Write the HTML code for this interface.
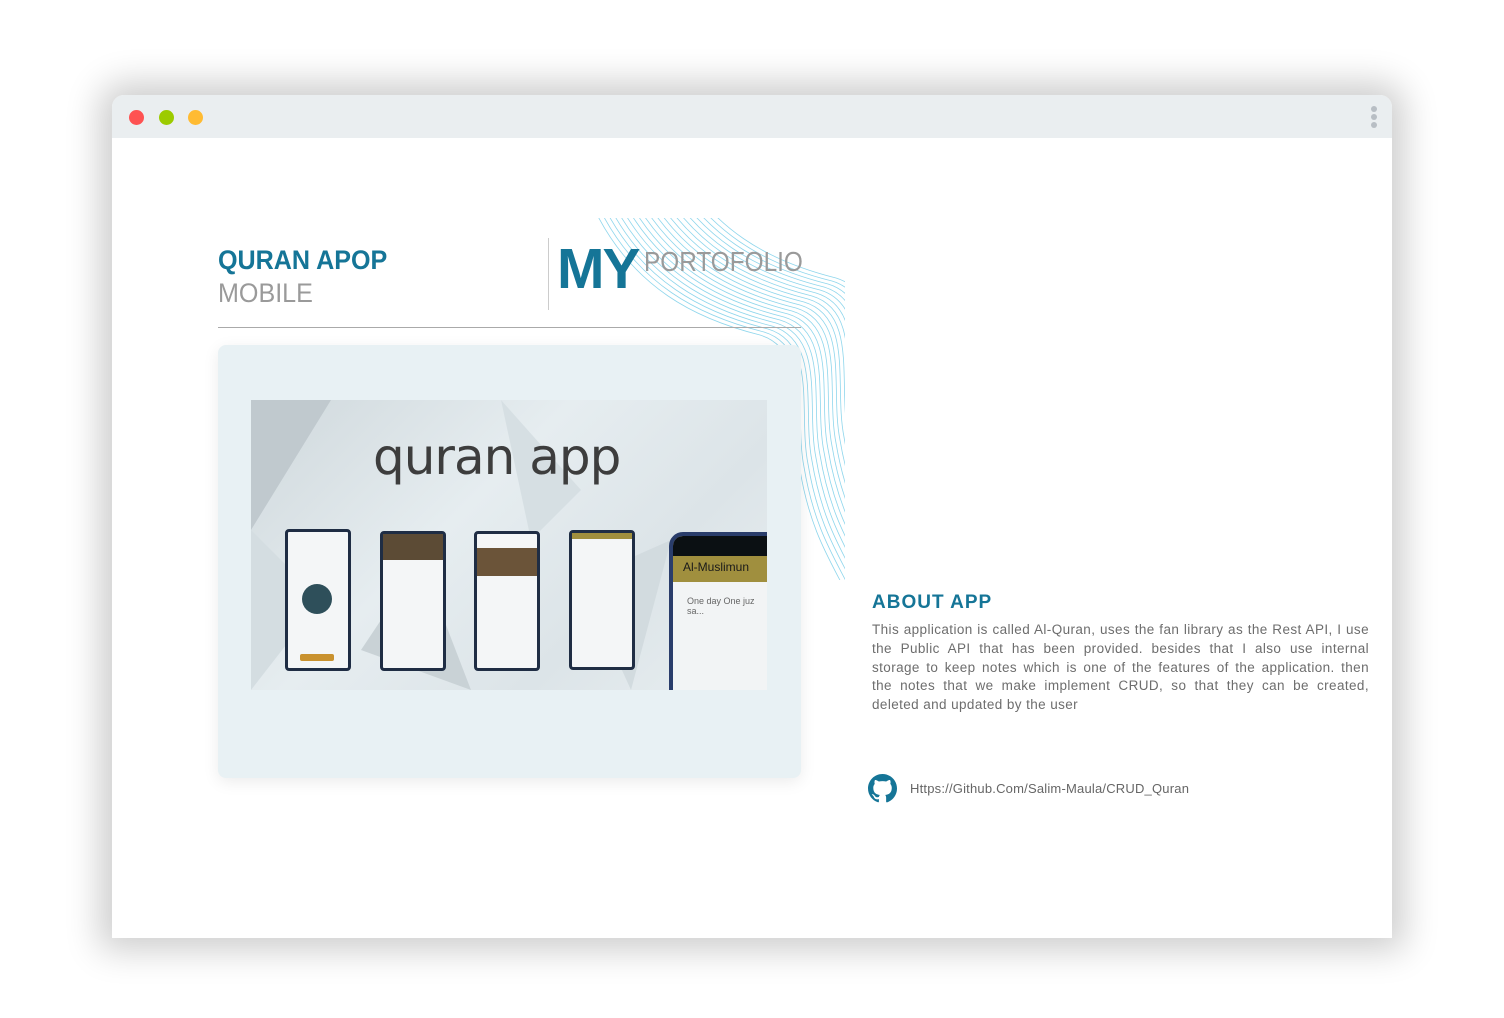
<!DOCTYPE html>
<html><head><meta charset="utf-8"><style>
*{margin:0;padding:0;box-sizing:border-box}
body{width:1504px;height:1018px;background:#fff;position:relative;overflow:hidden;font-family:"Liberation Sans",sans-serif}
.win{position:absolute;left:112px;top:95px;width:1280px;height:843px;background:#fff;border-radius:12px 12px 0 0;box-shadow:0 0 35px 12px rgba(0,0,0,0.2);overflow:hidden}
.bar{height:43px;background:#eaeef0;position:relative}
.dot{position:absolute;top:15px;width:15px;height:15px;border-radius:50%}
.k{position:absolute;right:15px;width:6px;height:6px;border-radius:50%;background:#b8bec4}
.abs{position:absolute}
.j{text-align:justify;text-align-last:justify;white-space:nowrap}
</style></head><body>
<div class="win">
<div class="bar">
<div class="dot" style="left:17px;background:#fe5252"></div>
<div class="dot" style="left:47px;background:#9ccb00"></div>
<div class="dot" style="left:76px;background:#ffbb32"></div>
<div class="k" style="top:11px"></div><div class="k" style="top:19px"></div><div class="k" style="top:27px"></div>
</div>
</div>
<svg class="abs" style="left:0;top:0" width="1504" height="1018">
<defs><clipPath id="c"><rect x="585" y="218" width="260" height="362"/></clipPath>
<path id="w" d="M590,200 C630,290 700,320 760,335 C810,350 790,420 800,470 C810,530 830,560 845,590" fill="none" stroke="#8fd6ec" stroke-width="0.8"/></defs>
<g clip-path="url(#c)">
<use href="#w"/><use href="#w" transform="translate(4,-3)"/><use href="#w" transform="translate(8,-6)"/><use href="#w" transform="translate(12,-9)"/><use href="#w" transform="translate(16,-12)"/><use href="#w" transform="translate(20,-15)"/><use href="#w" transform="translate(24,-18)"/><use href="#w" transform="translate(28,-21)"/><use href="#w" transform="translate(32,-24)"/><use href="#w" transform="translate(36,-27)"/><use href="#w" transform="translate(40,-30)"/><use href="#w" transform="translate(44,-33)"/><use href="#w" transform="translate(48,-36)"/><use href="#w" transform="translate(52,-39)"/><use href="#w" transform="translate(56,-42)"/><use href="#w" transform="translate(60,-45)"/><use href="#w" transform="translate(64,-48)"/><use href="#w" transform="translate(68,-51)"/><use href="#w" transform="translate(72,-54)"/><use href="#w" transform="translate(76,-57)"/>
</g></svg>
<div class="abs" style="left:218px;top:245px;font-size:27px;font-weight:bold;color:#157597;transform:scaleX(0.93);transform-origin:left">QURAN APOP</div>
<div class="abs" style="left:218px;top:278px;font-size:27px;color:#9a9a9a;transform:scaleX(0.93);transform-origin:left">MOBILE</div>
<div class="abs" style="left:548px;top:238px;width:1px;height:72px;background:#ccc"></div>
<div class="abs" style="left:557px;top:236px;font-size:57px;font-weight:bold;color:#157597;letter-spacing:-2px">MY</div>
<div class="abs" style="left:644px;top:246px;font-size:28px;color:#9a9a9a;transform:scaleX(0.87);transform-origin:left">PORTOFOLIO</div>
<div class="abs" style="left:218px;top:327px;width:583px;height:1px;background:#aaa"></div>
<div class="abs" style="left:218px;top:345px;width:583px;height:433px;background:#e8f1f4;border-radius:8px;box-shadow:0 4px 16px rgba(0,0,0,0.08)"></div>
<div class="abs" style="left:251px;top:400px;width:516px;height:290px;background:linear-gradient(135deg,#cfd8dc,#e6edf0 40%,#dce4e8 70%,#e9eff1);overflow:hidden">
<svg width="516" height="290" style="position:absolute;left:0;top:0"><polygon points="0,0 80,0 0,130" fill="#c0c9ce"/><polygon points="0,130 70,200 0,290" fill="#d4dde1"/><polygon points="110,250 170,160 220,290" fill="#c9d2d6"/><polygon points="250,0 330,90 280,140" fill="#d6dfe3"/><polygon points="330,180 420,140 380,290" fill="#d2dbdf"/></svg>
<div style="position:absolute;left:122px;top:28px;font-size:50px;color:#3d3d3d;font-family:'DejaVu Sans',sans-serif;letter-spacing:-1px">quran app</div>
<div style="position:absolute;left:34px;top:129px;width:66px;height:142px;background:#f4f6f7;border:3px solid #1f2d44;border-radius:4px"><div style="position:absolute;left:12px;top:122px;width:34px;height:7px;background:#c9922f;border-radius:2px"></div><div style="position:absolute;left:14px;top:52px;width:30px;height:30px;background:#2e4f5a;border-radius:50%"></div></div>
<div style="position:absolute;left:129px;top:131px;width:66px;height:140px;background:#f4f6f7;border:3px solid #1f2d44;border-radius:4px"><div style="height:26px;background:#5c4b35"></div></div>
<div style="position:absolute;left:223px;top:131px;width:66px;height:140px;background:#f4f6f7;border:3px solid #1f2d44;border-radius:4px"><div style="margin-top:14px;height:28px;background:#6b5439"></div></div>
<div style="position:absolute;left:318px;top:130px;width:66px;height:140px;background:#f4f6f7;border:3px solid #1f2d44;border-radius:4px"><div style="height:6px;background:#a08f3e"></div></div>
<div style="position:absolute;left:418px;top:132px;width:110px;height:170px;background:#f2f4f5;border:4px solid #2a3d6b;border-radius:14px 0 0 0;overflow:hidden"><div style="height:20px;background:#0b1013"></div><div style="height:26px;background:#a08f3e;font-size:12px;padding:4px 10px;color:#1a1a1a">Al-Muslimun</div><div style="font-size:9px;color:#666;padding:14px 14px">One day One juz<br>sa...</div></div>
</div>
<div class="abs" style="left:872px;top:592px;font-size:19px;font-weight:bold;color:#157597;letter-spacing:1px">ABOUT APP</div>
<div class="abs" style="left:872px;top:621px;width:497px;font-size:13.5px;line-height:18.8px;color:#6d6d6d;letter-spacing:0.4px">
<div class="j">This application is called Al-Quran, uses the fan library as the Rest API, I use</div>
<div class="j">the Public API that has been provided. besides that I also use internal</div>
<div class="j">storage to keep notes which is one of the features of the application. then</div>
<div class="j">the notes that we make implement CRUD, so that they can be created,</div>
<div>deleted and updated by the user</div>
</div>
<svg class="abs" style="left:868px;top:774px" width="29" height="29" viewBox="0 0 16 16"><path fill="#157597" d="M8 0C3.58 0 0 3.58 0 8c0 3.54 2.29 6.53 5.47 7.59.4.07.55-.17.55-.38v-1.33c-2.23.48-2.7-1.07-2.7-1.07-.36-.92-.89-1.17-.89-1.17-.73-.5.06-.49.06-.49.8.06 1.23.83 1.23.83.72 1.22 1.87.87 2.33.66.07-.52.28-.87.51-1.070-1.78-.2-3.65-.89-3.65-3.95 0-.87.31-1.59.82-2.15-.08-.2-.36-1.02.08-2.12 0 0 .67-.21 2.2.82.64-.18 1.32-.27 2-.27.68 0 1.36.09 2 .27 1.53-1.04 2.2-.82 2.2-.82.44 1.1.16 1.92.08 2.12.51.56.82 1.27.82 2.15 0 3.07-1.87 3.75-3.65 3.95.29.25.54.73.54 1.48v2.2c0 .21.15.46.55.38A8.01 8.01 0 0016 8c0-4.42-3.58-8-8-8z"/></svg>
<div class="abs" style="left:910px;top:781px;font-size:13px;color:#666;letter-spacing:0.2px">Https://Github.Com/Salim-Maula/CRUD_Quran</div>
</body></html>
